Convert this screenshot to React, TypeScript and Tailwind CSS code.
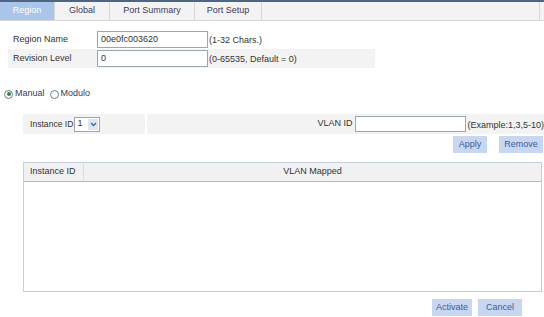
const font = "font-['Liberation_Sans',Arial,sans-serif]";

function Tab({ label, w, active }: { label: string; w: string; active?: boolean }) {
  return (
    <div
      className={`${w} h-full flex items-center justify-center border-r border-[#d6d6d6] ${
        active ? "bg-[#a9c5ea] text-white" : "text-[#3a3a5a]"
      }`}
    >
      {label}
    </div>
  );
}

function Btn({ label, w }: { label: string; w: string }) {
  return (
    <div className={`${w} h-[17px] flex items-center justify-center bg-[#c7d7f2] text-[#3f5a94]`}>
      {label}
    </div>
  );
}

function Radio({ checked }: { checked?: boolean }) {
  return (
    <span className="w-[9px] h-[9px] rounded-full border border-[#6a7a8a] bg-white flex items-center justify-center">
      {checked && <span className="w-[4px] h-[4px] rounded-full bg-[#2a8a3a]" />}
    </span>
  );
}

export default function App() {
  return (
    <div className={`w-[544px] h-[317px] bg-white text-[9px] text-[#333] overflow-hidden ${font}`}>
      {/* tabs */}
      <div className="h-[21px] border-t-2 border-[#4d6686] bg-[#f3f3f3] border-b border-b-[#d8d8d8] flex">
        <Tab label="Region" w="w-[55px]" active />
        <Tab label="Global" w="w-[55px]" />
        <Tab label="Port Summary" w="w-[85px]" />
        <Tab label="Port Setup" w="w-[67px]" />
        <div className="w-[278px] h-full border-r border-[#d6d6d6]" />
      </div>

      {/* region settings */}
      <div className="mt-[9px] ml-[8px] w-[367px]">
        <div className="h-[19px] flex items-center">
          <span className="w-[89px] pl-[5px]">Region Name</span>
          <div className="w-[111px] h-[17px] border border-[#9aa6b4] bg-white flex items-center px-[3px]">00e0fc003620</div>
          <span className="ml-[1px] mt-[3px]">(1-32 Chars.)</span>
        </div>
        <div className="h-[19px] flex items-center bg-[#f3f3f3]">
          <span className="w-[89px] pl-[5px]">Revision Level</span>
          <div className="w-[111px] h-[17px] border border-[#9aa6b4] bg-white flex items-center px-[3px]">0</div>
          <span className="ml-[1px] mt-[3px]">(0-65535, Default = 0)</span>
        </div>
      </div>

      {/* mode */}
      <div className="mt-[21px] ml-[4px] h-[10px] flex items-center gap-[2px] text-[#3a3a5a]">
        <Radio checked />
        <span>Manual</span>
        <span className="w-[1px]" />
        <Radio />
        <span>Modulo</span>
      </div>

      {/* instance row */}
      <div className="mt-[15px] ml-[23px] h-[20px] flex gap-[2px]">
        <div className="w-[122px] bg-[#f3f3f3] flex items-center pl-[7px]">
          <span className="text-[8.6px]">Instance ID</span>
          <div className="ml-[1px] w-[26px] h-[15px] border border-[#9aa6b4] bg-white flex items-center">
            <span className="pl-[2px] w-[13px]">1</span>
            <span className="w-[10px] h-[11px] bg-[#dbe6f7] flex items-center justify-center">
              <svg width="7" height="5" viewBox="0 0 7 5">
                <path d="M1 1 L3.5 3.5 L6 1" fill="none" stroke="#3a6ab0" strokeWidth="1.4" />
              </svg>
            </span>
          </div>
        </div>
        <div className="flex-1 bg-[#f3f3f3] flex items-center justify-end">
          <span className="mr-[3px]">VLAN ID</span>
          <div className="w-[111px] h-[16px] border border-[#9aa6b4] bg-white" />
          <span className="ml-[1px] mt-[3px]">(Example:1,3,5-10)</span>
        </div>
      </div>

      <div className="mt-[2px] h-[18px] flex justify-end gap-[12px] pr-[1px]">
        <Btn label="Apply" w="w-[34px]" />
        <Btn label="Remove" w="w-[44px]" />
      </div>

      {/* table */}
      <div className="mt-[8px] ml-[23px] w-[519px] h-[130px] border border-[#c5cde0] flex flex-col">
        <div className="h-[19px] bg-[#f1f1f1] border-b border-[#a9bedd] flex items-center">
          <span className="w-[60px] pl-[6px] h-full flex items-center border-r border-[#dcdcdc]">Instance ID</span>
          <span className="flex-1 text-center">VLAN Mapped</span>
        </div>
        <div className="flex-1 bg-white" />
      </div>

      <div className="mt-[7px] flex justify-end gap-[6px] pr-[22px]">
        <Btn label="Activate" w="w-[40px]" />
        <Btn label="Cancel" w="w-[44px]" />
      </div>
    </div>
  );
}
